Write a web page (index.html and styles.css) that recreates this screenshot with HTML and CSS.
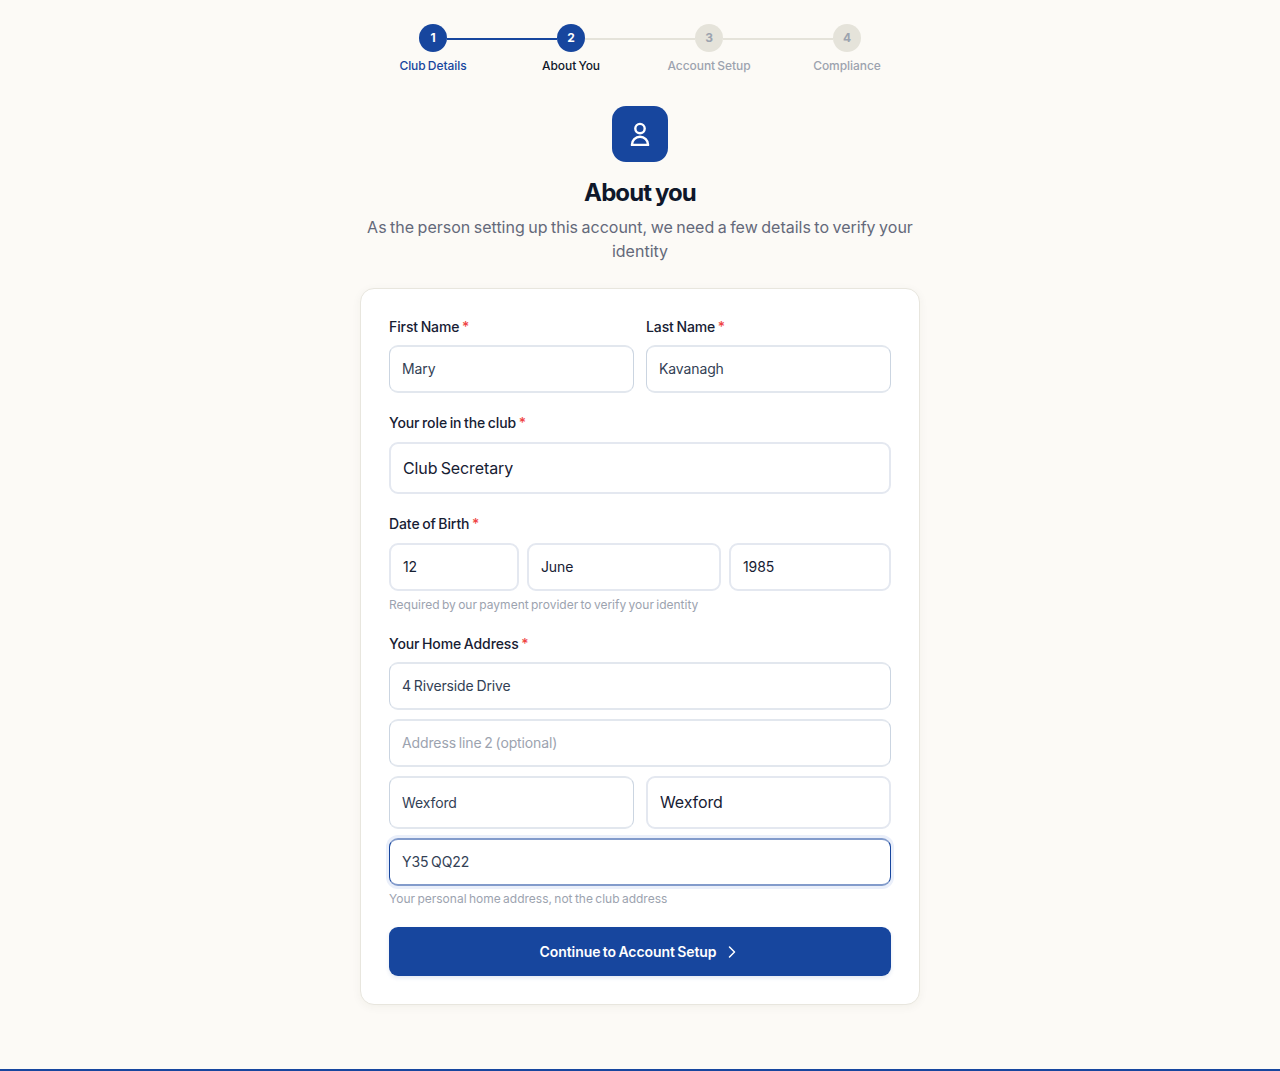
FILE: index.html
```html
<!DOCTYPE html>
<html lang="en">
<head>
  <meta charset="UTF-8">
  <meta name="viewport" content="width=device-width, initial-scale=1.0">
  <title>About you</title>
  <link rel="stylesheet" href="styles.css">
</head>
<body>
  <main class="page">
    <ol class="steps">
      <li class="step done"><span class="dot">1</span><span class="step-label">Club Details</span></li>
      <li class="step current"><span class="dot">2</span><span class="step-label">About You</span></li>
      <li class="step"><span class="dot">3</span><span class="step-label">Account Setup</span></li>
      <li class="step"><span class="dot">4</span><span class="step-label">Compliance</span></li>
    </ol>

    <header class="intro">
      <div class="intro-icon">
        <svg width="28" height="28" viewBox="0 0 28 28" fill="none" stroke="#fff" stroke-width="2.4" stroke-linecap="round" stroke-linejoin="round">
          <circle cx="14" cy="8.6" r="4.7"/>
          <path d="M5.9 24.9a8.1 8.1 0 0 1 16.2 0z"/>
        </svg>
      </div>
      <h1>About you</h1>
      <p>As the person setting up this account, we need a few details to verify your identity</p>
    </header>

    <form class="card">
      <div class="row name-row">
        <div>
          <label for="first">First Name <span class="req">*</span></label>
          <input class="field" id="first" type="text" value="Mary">
        </div>
        <div>
          <label for="last">Last Name <span class="req">*</span></label>
          <input class="field" id="last" type="text" value="Kavanagh">
        </div>
      </div>

      <div class="role">
        <label for="role">Your role in the club <span class="req">*</span></label>
        <select class="field select large" id="role"><option>Club Secretary</option></select>
      </div>

      <div class="dob">
        <label for="day">Date of Birth <span class="req">*</span></label>
        <div class="date-row">
          <select class="field select" id="day"><option>12</option></select>
          <select class="field select"><option>June</option></select>
          <select class="field select"><option>1985</option></select>
        </div>
        <p class="hint">Required by our payment provider to verify your identity</p>
      </div>

      <div class="address">
        <label for="line1">Your Home Address <span class="req">*</span></label>
        <div class="address-fields">
          <input class="field" id="line1" type="text" value="4 Riverside Drive">
          <input class="field" type="text" placeholder="Address line 2 (optional)">
          <div class="row town-row">
            <input class="field" type="text" value="Wexford">
            <select class="field select large"><option>Wexford</option></select>
          </div>
          <input class="field active" type="text" value="Y35 QQ22">
        </div>
        <p class="hint">Your personal home address, not the club address</p>
      </div>

      <button class="continue" type="button">
        <span>Continue to Account Setup</span>
        <svg width="16" height="16" viewBox="0 0 16 16" fill="none" stroke="currentColor" stroke-width="1.5" stroke-linecap="round" stroke-linejoin="round">
          <path d="M5.5 3l5 5-5 5"/>
        </svg>
      </button>
    </form>
  </main>
  <footer class="footer"></footer>
</body>
</html>
```
FILE: styles.css
```css
* {
  box-sizing: border-box;
}
body {
  margin: 0;
  height: 1071px;
  display: flex;
  flex-direction: column;
  background: #fcfaf6;
  color: #0f172a;
  font-family: Inter, "Liberation Sans", sans-serif;
  word-spacing: -1px;
  overflow: hidden;
}
.page {
  flex: 1;
  width: 560px;
  margin: 0 auto;
  padding-top: 24px;
}

/* Progress steps */
.steps {
  display: flex;
  width: 552px;
  margin: 0 auto;
  padding: 0;
  list-style: none;
}
.step {
  flex: 1;
  display: grid;
  grid-template-columns: 1fr 28px 1fr;
  color: #9ca3af;
}
.step::before,
.step::after {
  content: "";
  grid-row: 1;
  height: 2px;
  margin-top: 14px;
  background: #e5e3da;
}
.step::before {
  grid-column: 1;
}
.step::after {
  grid-column: 3;
}
.step:first-child::before,
.step:last-child::after {
  background: none;
}
.step.done::after,
.step.current::before {
  background: #17469e;
}
.dot {
  grid-column: 2;
  grid-row: 1;
  height: 28px;
  border-radius: 50%;
  background: #e5e3da;
  font-size: 12px;
  font-weight: 700;
  line-height: 28px;
  text-align: center;
}
.done .dot,
.current .dot {
  background: #17469e;
  color: #fff;
}
.step-label {
  grid-column: 1 / 4;
  margin-top: 6px;
  font-size: 12px;
  font-weight: 500;
  line-height: 16px;
  letter-spacing: -0.05px;
  text-align: center;
}
.done .step-label {
  color: #17469e;
}
.current .step-label {
  color: #0f172a;
}

/* Heading */
.intro {
  margin-top: 31.5px;
  text-align: center;
}
.intro-icon {
  display: flex;
  align-items: center;
  justify-content: center;
  width: 56px;
  height: 56px;
  margin: 0 auto;
  border-radius: 14px;
  background: #17469e;
}
h1 {
  margin: 15.5px 0 6px;
  font-size: 24px;
  font-weight: 700;
  line-height: 32px;
  letter-spacing: -0.9px;
}
.intro p {
  margin: 0;
  color: #64697a;
  font-size: 16px;
  line-height: 24px;
}

/* Form */
.card {
  height: 717px;
  margin-top: 25px;
  padding: 28px;
  border: 1px solid #e8e6de;
  border-radius: 14px;
  background: #fff;
  box-shadow: 0 2px 10px rgba(60, 50, 20, 0.05);
}
label {
  display: block;
  margin-bottom: 8px;
  color: #172033;
  font-size: 14px;
  font-weight: 500;
  line-height: 20px;
  letter-spacing: -0.1px;
}
.req {
  color: #ef4444;
}
.row {
  display: grid;
  grid-template-columns: 1fr 1fr;
  gap: 12px;
}
.field {
  display: block;
  width: 100%;
  height: 48px;
  margin: 0;
  padding: 0 12px 1px;
  border: 1px solid #cbd5e1;
  border-width: 2px 1px;
  border-color: #e2e7ee #cbd5e1;
  border-radius: 9px;
  outline: none;
  background: #fff;
  color: #334155;
  font-family: inherit;
  font-size: 14px;
  letter-spacing: -0.12px;
  word-spacing: inherit;
}
.field::placeholder {
  color: #9ca3af;
}
.select {
  appearance: none;
  border: 2px solid #e4e8f0;
  color: #172033;
}
.large {
  height: 52px;
  font-size: 16px;
}
.role {
  margin-top: 20px;
}
.dob {
  margin-top: 20px;
}
.role label,
.dob label {
  margin-bottom: 9px;
}
.date-row {
  display: grid;
  grid-template-columns: 130px 194px 162px;
  gap: 8px;
}
.hint {
  margin: 6px 0 0;
  color: #9ca3af;
  font-size: 12px;
  line-height: 16px;
}
.address {
  margin-top: 21px;
}
.address .hint {
  margin-top: 5px;
}
.address-fields {
  display: grid;
  gap: 9px;
}
.town-row .field {
  height: 53px;
}
.field.active {
  border-color: #829bcb #17469e;
  box-shadow: 0 0 0 3px #eaeffa;
}
.continue {
  display: flex;
  align-items: center;
  justify-content: center;
  gap: 8px;
  width: 100%;
  height: 49px;
  margin-top: 20px;
  padding: 0;
  border: 0;
  border-radius: 9px;
  background: #17469e;
  box-shadow: 0 2px 4px rgba(23, 70, 158, 0.12);
  color: #fff;
  font-family: inherit;
  font-size: 14px;
  font-weight: 600;
  letter-spacing: -0.08px;
  word-spacing: inherit;
}

.footer {
  height: 2px;
  background: #17469e;
}
```
